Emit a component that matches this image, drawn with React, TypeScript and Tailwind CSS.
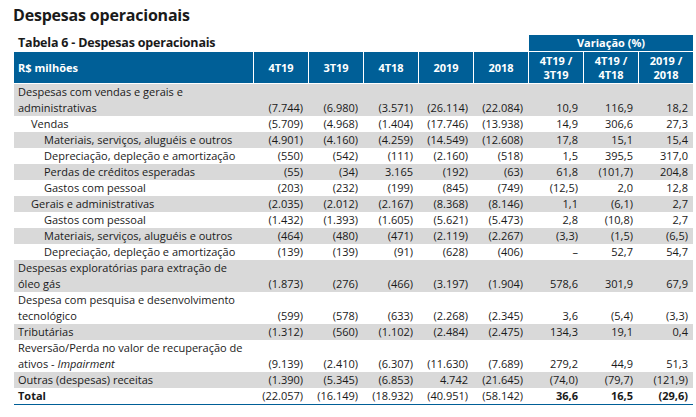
import React from 'react';

type Row = {
  label: React.ReactNode;
  indent?: 0 | 1 | 2;
  values: string[];
  gray?: boolean;
  total?: boolean;
};

const ROWS: Row[] = [
  {
    label: (
      <>
        Despesas com vendas e gerais e
        <br />
        administrativas
      </>
    ),
    values: ['(7.744)', '(6.980)', '(3.571)', '(26.114)', '(22.084)', '10,9', '116,9', '18,2'],
    gray: true,
  },
  { label: 'Vendas', indent: 1, values: ['(5.709)', '(4.968)', '(1.404)', '(17.746)', '(13.938)', '14,9', '306,6', '27,3'] },
  { label: 'Materiais, serviços, aluguéis e outros', indent: 2, values: ['(4.901)', '(4.160)', '(4.259)', '(14.549)', '(12.608)', '17,8', '15,1', '15,4'], gray: true },
  { label: 'Depreciação, depleção e amortização', indent: 2, values: ['(550)', '(542)', '(111)', '(2.160)', '(518)', '1,5', '395,5', '317,0'] },
  { label: 'Perdas de créditos esperadas', indent: 2, values: ['(55)', '(34)', '3.165', '(192)', '(63)', '61,8', '(101,7)', '204,8'], gray: true },
  { label: 'Gastos com pessoal', indent: 2, values: ['(203)', '(232)', '(199)', '(845)', '(749)', '(12,5)', '2,0', '12,8'] },
  { label: 'Gerais e administrativas', indent: 1, values: ['(2.035)', '(2.012)', '(2.167)', '(8.368)', '(8.146)', '1,1', '(6,1)', '2,7'], gray: true },
  { label: 'Gastos com pessoal', indent: 2, values: ['(1.432)', '(1.393)', '(1.605)', '(5.621)', '(5.473)', '2,8', '(10,8)', '2,7'] },
  { label: 'Materiais, serviços, aluguéis e outros', indent: 2, values: ['(464)', '(480)', '(471)', '(2.119)', '(2.267)', '(3,3)', '(1,5)', '(6,5)'], gray: true },
  { label: 'Depreciação, depleção e amortização', indent: 2, values: ['(139)', '(139)', '(91)', '(628)', '(406)', '–', '52,7', '54,7'] },
  {
    label: (
      <>
        Despesas exploratórias para extração de
        <br />
        óleo gás
      </>
    ),
    values: ['(1.873)', '(276)', '(466)', '(3.197)', '(1.904)', '578,6', '301,9', '67,9'],
    gray: true,
  },
  {
    label: (
      <>
        Despesa com pesquisa e desenvolvimento
        <br />
        tecnológico
      </>
    ),
    values: ['(599)', '(578)', '(633)', '(2.268)', '(2.345)', '3,6', '(5,4)', '(3,3)'],
  },
  { label: 'Tributárias', values: ['(1.312)', '(560)', '(1.102)', '(2.484)', '(2.475)', '134,3', '19,1', '0,4'], gray: true },
  {
    label: (
      <>
        Reversão/Perda no valor de recuperação de
        <br />
        ativos - <i>Impairment</i>
      </>
    ),
    values: ['(9.139)', '(2.410)', '(6.307)', '(11.630)', '(7.689)', '279,2', '44,9', '51,3'],
  },
  { label: 'Outras (despesas) receitas', values: ['(1.390)', '(5.345)', '(6.853)', '4.742', '(21.645)', '(74,0)', '(79,7)', '(121,9)'], gray: true },
  { label: 'Total', values: ['(22.057)', '(16.149)', '(18.932)', '(40.951)', '(58.142)', '36,6', '16,5', '(29,6)'], total: true },
];

const INDENT = ['pl-[4px]', 'pl-[17px]', 'pl-[30px]'];

export default function App() {
  return (
    <div
      className="w-[696px] h-[417px] bg-white text-[#1a1a1a] pl-[13px] pt-[4px]"
      style={{ fontFamily: '"Open Sans", "Noto Sans", sans-serif' }}
    >
      <h1 className="text-[16px] font-bold leading-[22px] tracking-[-0.2px]">Despesas operacionais</h1>

      <div className="ml-[1px] mt-[9px] w-[679px]">
        {/* Caption + Variação header */}
        <div className="grid grid-cols-[514px_165px] items-end">
          <div className="pl-[4px] text-[12.5px] font-bold leading-[16px] tracking-[-0.2px]">
            Tabela 6 - Despesas operacionais
          </div>
          <div className="h-[16px] bg-[#005f97] text-white text-[11px] font-bold leading-[16px] text-center ml-[1px]">
            Variação (%)
          </div>
        </div>

        {/* Column header */}
        <div className="mt-[1px] grid grid-cols-[239px_repeat(8,55px)] h-[31px] bg-[#005f97] text-white text-[11px] font-bold leading-[14px]">
          <div className="flex items-center pl-[4px]">R$ milhões</div>
          {['4T19', '3T19', '4T18', '2019', '2018'].map((h) => (
            <div key={h} className="flex items-center justify-center border-l border-white">
              {h}
            </div>
          ))}
          {[
            ['4T19 /', '3T19'],
            ['4T19 /', '4T18'],
            ['2019 /', '2018'],
          ].map(([a, b]) => (
            <div key={a + b} className="flex flex-col items-center justify-center border-l border-white">
              <span>{a}</span>
              <span>{b}</span>
            </div>
          ))}
        </div>

        {/* Body */}
        <div className="mt-[1px] text-[11px] leading-[16px] border-b-[1.5px] border-[#005f97]">
          {ROWS.map((row, i) => (
            <div
              key={i}
              className={`grid grid-cols-[239px_repeat(8,55px)] ${row.gray ? 'bg-[#d9d9d9]' : 'bg-white'}`}
            >
              <div className={`${INDENT[row.indent ?? 0]} ${row.total ? 'font-bold' : ''}`}>{row.label}</div>
              {row.values.map((v, j) => (
                <div
                  key={j}
                  className={`self-end text-right pr-[5px] ${row.total && j >= 5 ? 'font-bold' : ''}`}
                >
                  {v}
                </div>
              ))}
            </div>
          ))}
        </div>
      </div>
    </div>
  );
}
